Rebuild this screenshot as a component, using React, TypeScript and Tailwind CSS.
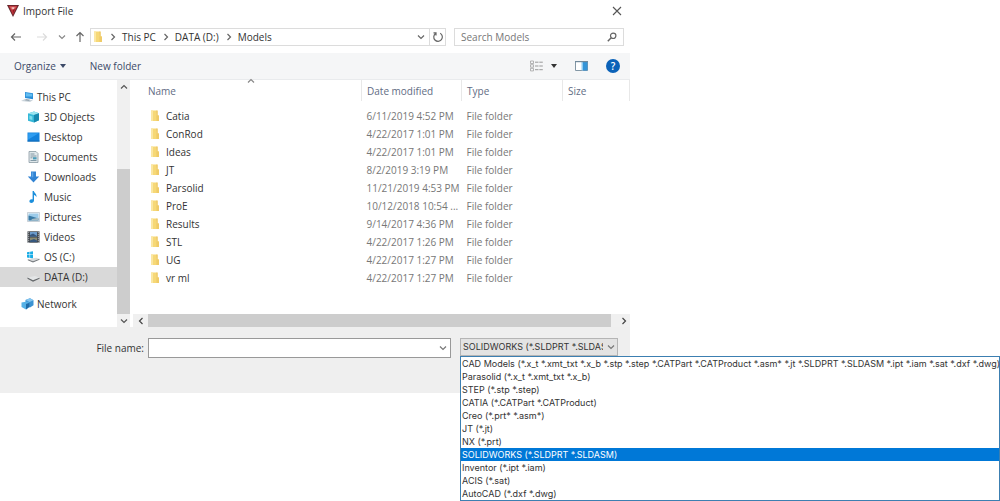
import React, { useState } from "react";

type IconProps = {
  className?: string;
};

type Place = {
  title: string;
  icon: React.FC<IconProps>;
};

type Folder = {
  name: string;
  modified: string;
};

const folders: Array<Folder> = [
  { name: "Catia", modified: "6/11/2019 4:52 PM" },
  { name: "ConRod", modified: "4/22/2017 1:01 PM" },
  { name: "Ideas", modified: "4/22/2017 1:01 PM" },
  { name: "JT", modified: "8/2/2019 3:19 PM" },
  { name: "Parsolid", modified: "11/21/2019 4:53 PM" },
  { name: "ProE", modified: "10/12/2018 10:54 ..." },
  { name: "Results", modified: "9/14/2017 4:36 PM" },
  { name: "STL", modified: "4/22/2017 1:26 PM" },
  { name: "UG", modified: "4/22/2017 1:27 PM" },
  { name: "vr ml", modified: "4/22/2017 1:27 PM" },
];

const fileTypes = [
  "CAD Models (*.x_t *.xmt_txt *.x_b *.stp *.step *.CATPart *.CATProduct *.asm* *.jt *.SLDPRT *.SLDASM *.ipt *.iam *.sat *.dxf *.dwg)",
  "Parasolid (*.x_t *.xmt_txt *.x_b)",
  "STEP (*.stp *.step)",
  "CATIA (*.CATPart *.CATProduct)",
  "Creo (*.prt* *.asm*)",
  "JT (*.jt)",
  "NX (*.prt)",
  "SOLIDWORKS (*.SLDPRT *.SLDASM)",
  "Inventor (*.ipt *.iam)",
  "ACIS (*.sat)",
  "AutoCAD (*.dxf *.dwg)",
];

function AppLogo() {
  return (
    <svg viewBox="0 0 12 12" className="h-3 w-3">
      <path d="M0 0h12L6 12z" fill="#5b2328" />
      <path d="M1.4 .8h9.2L6 10.200z" fill="#b8323a" />
      <path d="M3 1.800h6L7.500 4.600h-3z" fill="#e0706f" />
      <path d="M4.800 2.400h2.600L6 4.400z" fill="#fbe3e0" />
      <path d="M6 5l2-1.400L6 8.400z" fill="#8d1c25" />
    </svg>
  );
}

function Chevron({ className }: IconProps) {
  return (
    <svg viewBox="0 0 8 8" className={className} fill="none" stroke="currentColor">
      <path d="M1 2.500L4 5.500L7 2.500" strokeWidth="1.200" />
    </svg>
  );
}

function Arrow({ className }: IconProps) {
  return (
    <svg viewBox="0 0 12 12" className={className} fill="none" stroke="currentColor">
      <path d="M11 6H1.500M5 2.500L1.500 6L5 9.500" strokeWidth="1.200" />
    </svg>
  );
}

function FolderIcon({ className }: IconProps) {
  return (
    <svg viewBox="0 0 10 12" className={className}>
      <path d="M1 .500h5.500v5H9V11H1z" fill="#f6d877" />
      <path d="M6 .500h1.800v5H9V11H6.500z" fill="#efcb68" />
      <path d="M1 .500h2V11H1z" fill="#fbe7a3" />
    </svg>
  );
}

function PcIcon({ className }: IconProps) {
  return (
    <svg viewBox="0 0 13 12" className={className}>
      <path d="M4 1l8 1.200v6L4 7z" fill="#2b8fd9" />
      <path d="M4.800 2l6.400 1v2.400L4.800 5.500z" fill="#63bdf0" />
      <path d="M0 10l4-2 8 1.200-3 1.800z" fill="#c9d3da" />
      <path d="M5 8.200l4 .6-1 .9-4-.5z" fill="#8697a3" />
    </svg>
  );
}

function CubeIcon({ className }: IconProps) {
  return (
    <svg viewBox="0 0 13 12" className={className}>
      <path d="M1 2.400L7 .600l5 1.600v7L7 11.600 1 9.800z" fill="#35b8d8" />
      <path d="M1 2.400L7 .600l5 1.600-5 1.900z" fill="#9ce5f0" />
      <path d="M7 4.100l5-1.900v7L7 11.600z" fill="#1688ae" />
      <path d="M2.400 4.600l3 .9v3.600l-3-.9z" fill="#7edcec" />
    </svg>
  );
}

function DesktopIcon({ className }: IconProps) {
  return (
    <svg viewBox="0 0 13 12" className={className}>
      <path d="M.5 1.500h12v9H.5z" fill="#1382dc" />
      <path d="M1.200 2.200h10.600L1.200 8.600z" fill="#2e9df1" />
      <path d="M.5 9.600h12v.9H.5z" fill="#0f63ab" />
    </svg>
  );
}

function DocumentIcon({ className }: IconProps) {
  return (
    <svg viewBox="0 0 13 12" className={className}>
      <path d="M2 .500h7l2 2v9H2z" fill="#dfe7ea" stroke="#8a9ba3" strokeWidth=".8" />
      <path d="M3.500 3h4M3.500 5h6M3.500 9.500h6" stroke="#6a8796" strokeWidth=".8" />
      <path d="M6 6.200h3.600v2.200H6z" fill="#4c9dba" />
      <path d="M3.500 6.800h2" stroke="#6a8796" strokeWidth=".8" />
    </svg>
  );
}

function DownloadIcon({ className }: IconProps) {
  return (
    <svg viewBox="0 0 13 12" className={className}>
      <path d="M4 .500h5v5h3.200L6.500 11.500.8 5.500H4z" fill="#3183d3" />
      <path d="M4.700 1.200h1.600v5H2.600L4.700 6z" fill="#5ca5e6" />
    </svg>
  );
}

function MusicIcon({ className }: IconProps) {
  return (
    <svg viewBox="0 0 13 12" className={className}>
      <path
        d="M5.600 0h1.300c.2 2 3.200 2.800 2.500 6.200-.4-1.400-1.300-2-2.400-2.300v5.500c0 1.600-1.300 2.500-2.600 2.500S2.400 11.200 2.400 10.200c0-1.300 1.500-2.200 3.200-1.800z"
        fill="#1b8fdc"
      />
    </svg>
  );
}

function PictureIcon({ className }: IconProps) {
  return (
    <svg viewBox="0 0 13 12" className={className}>
      <path d="M.5 1.500h12v9H.5z" fill="#f1f5f8" stroke="#b3bfc8" strokeWidth=".7" />
      <path d="M1.500 2.500h10v7h-10z" fill="#9ccbe9" />
      <path d="M1.500 4.500l3.500 1 6.500 2v2h-10z" fill="#397aa5" />
      <path d="M5 8l6.500-1.200v2.700H4z" fill="#a3bbc6" />
    </svg>
  );
}

function VideoIcon({ className }: IconProps) {
  return (
    <svg viewBox="0 0 13 12" className={className}>
      <path d="M.5.300h12v11.400H.5z" fill="#3d4248" />
      <path d="M3 1h7v4.500H3z" fill="#6b9bcb" />
      <path d="M3 6.500h7V11H3z" fill="#8a8a70" />
      <path d="M3 4l3-1.500L10 5v.5H3zM3 9.500L7 8l3 1.500V11H3z" fill="#36577e" />
      <path d="M1.700.800v11M11.300.800v11" stroke="#c6cbd0" strokeDasharray="1 1" />
    </svg>
  );
}

function WindowsDriveIcon({ className }: IconProps) {
  return (
    <svg viewBox="0 0 13 12" className={className}>
      <path
        d="M0 1.200L2.600.800v2.800H0zM3.100.700L6 .300v3.300H3.100zM0 4.100h2.600v2.800L0 6.500zM3.100 4.100H6v3.300l-2.900-.4z"
        fill="#18ace6"
      />
      <path d="M.8 8.200L9 6.700l3.500 1L6 10.200z" fill="#d7dadc" />
      <path d="M.8 8.200L6 10.200l6.500-2.500v1.100L6 11.500.8 9.200z" fill="#74797d" />
    </svg>
  );
}

function DriveIcon({ className }: IconProps) {
  return (
    <svg viewBox="0 0 13 12" className={className}>
      <path d="M.5 6.500L8 5l4.500 1.700L6 9.300z" fill="#e4e6e7" />
      <path d="M.5 6.500L6 9.300l6.500-2.600v1.100L6 10.800.5 7.800z" fill="#64686b" />
    </svg>
  );
}

function NetworkIcon({ className }: IconProps) {
  return (
    <svg viewBox="0 0 13 12" className={className}>
      <path d="M4.500 2L9 .300l3.500 2v5L9 9.500 4.500 8z" fill="#3b93d3" />
      <path d="M4.500 2L9 .300l3.500 2L8.500 4z" fill="#86c6ef" />
      <path d="M.5 4.500L6 3.500l2.500 1.300v4L5 11.500.5 9z" fill="#55b1e6" />
      <path d="M5 6l3.500-1.200v4L5 11.500z" fill="#1f6ba8" />
    </svg>
  );
}

const places: Array<Place> = [
  { title: "3D Objects", icon: CubeIcon },
  { title: "Desktop", icon: DesktopIcon },
  { title: "Documents", icon: DocumentIcon },
  { title: "Downloads", icon: DownloadIcon },
  { title: "Music", icon: MusicIcon },
  { title: "Pictures", icon: PictureIcon },
  { title: "Videos", icon: VideoIcon },
  { title: "OS (C:)", icon: WindowsDriveIcon },
  { title: "DATA (D:)", icon: DriveIcon },
];

function TitleBar() {
  return (
    <header className="flex h-[22px] items-center pr-2 pl-[7px]">
      <AppLogo />
      <h1 className="ml-1">Import File</h1>
      <button aria-label="Close" className="ml-auto text-[#555]">
        <svg viewBox="0 0 10 10" className="h-[10px] w-[10px]" stroke="currentColor">
          <path d="M1 1L9 9M9 1L1 9" strokeWidth="1.100" />
        </svg>
      </button>
    </header>
  );
}

function AddressBar() {
  const crumbs = ["This PC", "DATA (D:)", "Models"];

  return (
    <div className="mt-[6px] flex h-[18px] items-center pr-[6px] pl-[10px]">
      <button aria-label="Back" className="text-[#666]">
        <Arrow className="h-3 w-3" />
      </button>
      <button aria-label="Forward" className="ml-[14px] text-[#dcdcdc]">
        <Arrow className="h-3 w-3 rotate-180" />
      </button>
      <button aria-label="Recent locations" className="ml-[10px] text-[#888]">
        <Chevron className="h-2 w-2" />
      </button>
      <button aria-label="Up" className="ml-2 text-[#666]">
        <Arrow className="h-3 w-3 rotate-90" />
      </button>

      <nav className="ml-1 flex h-full flex-1 items-center border border-[#dcdcdc] pl-[2px]">
        <FolderIcon className="h-3 w-[10px]" />
        {crumbs.map((crumb, index) => {
          return (
            <React.Fragment key={`crumb-${index}`}>
              <Chevron className="ml-[6px] h-2 w-2 -rotate-90 text-[#666]" />
              <button className="ml-[5px] whitespace-nowrap">{crumb}</button>
            </React.Fragment>
          );
        })}
        <button aria-label="Previous locations" className="ml-auto px-1 text-[#666]">
          <Chevron className="h-2 w-2" />
        </button>
        <button
          aria-label="Refresh"
          className="flex h-full w-4 items-center justify-center border-l border-[#dcdcdc] text-[#666]"
        >
          <svg viewBox="0 0 12 12" className="h-3 w-3" fill="none" stroke="currentColor">
            <path d="M8.200 2.300A4.300 4.300 0 1 1 3.600 2.500M1.500 1.900H4V4.600" strokeWidth="1.200" />
          </svg>
        </button>
      </nav>

      <div className="ml-2 flex h-full w-[170px] items-center border border-[#dcdcdc] px-[6px]">
        <input
          type="text"
          aria-label="Search Models"
          placeholder="Search Models"
          className="min-w-0 flex-1 outline-none placeholder:text-[#777]"
        />
        <svg viewBox="0 0 10 10" className="h-[10px] w-[10px] text-[#666]" fill="none" stroke="currentColor">
          <circle cx="6.200" cy="3.800" r="2.700" strokeWidth="1.200" />
          <path d="M4.200 5.800L.8 9.200" strokeWidth="1.500" />
        </svg>
      </div>
    </div>
  );
}

function Toolbar() {
  return (
    <div className="mt-[7px] flex h-[27px] items-center border-b border-[#e9ebed] bg-[#f5f6f7] pr-[10px] pl-[14px] text-[#3c4a68]">
      <button className="flex items-center">
        Organize
        <svg viewBox="0 0 6 4" className="ml-1 h-1 w-[6px]" fill="currentColor">
          <path d="M0 0h6L3 4z" />
        </svg>
      </button>
      <button className="ml-6">New folder</button>

      <button aria-label="Change your view" className="ml-auto flex items-center">
        <svg viewBox="0 0 13 12" className="h-3 w-[13px]" fill="none">
          <path d="M.5 1h3v2.500h-3zM.5 4.700h3v2.500h-3zM.5 8.400h3v2.500h-3z" stroke="#a2a2a2" strokeWidth=".8" />
          <path d="M5 2.200h8M5 6h8M5 9.700h8" stroke="#999" strokeDasharray="3.500 .8" />
        </svg>
        <svg viewBox="0 0 6 4" className="ml-2 h-1 w-[6px]" fill="#333">
          <path d="M0 0h6L3 4z" />
        </svg>
      </button>
      <button aria-label="Preview pane" className="ml-[18px]">
        <svg viewBox="0 0 13 10" className="h-[10px] w-[13px]">
          <path d="M.5.500h12v9H.5z" fill="#fff" stroke="#8397a5" />
          <path d="M6.500 1h2v8.500h-2z" fill="#8ecbf0" />
          <path d="M8 1h4.500v8.500H8z" fill="#3495d8" />
          <path d="M0 0h13v1.200H0z" fill="#71899b" />
        </svg>
      </button>
      <button
        aria-label="Help"
        className="ml-[18px] flex h-[14px] w-[14px] items-center justify-center rounded-full bg-[#0b62b8] leading-none font-semibold text-white"
      >
        ?
      </button>
    </div>
  );
}

function Sidebar() {
  const rowClass = "flex h-5 items-center gap-1 pl-[27px] whitespace-nowrap";
  const activeClass = "flex h-5 items-center gap-1 bg-[#d9d9d9] pl-[27px] whitespace-nowrap";

  return (
    <aside className="flex w-[130px] shrink-0">
      <nav className="min-w-0 flex-1 pt-[7px] pb-[13px]">
        <a href="#this-pc" className="flex h-5 items-center gap-[3px] pl-[21px]">
          <PcIcon className="h-3 w-[13px]" />
          This PC
        </a>
        {places.map((place, index) => {
          const Icon = place.icon;
          return (
            <a
              href={`#place-${index}`}
              key={`place-${index}`}
              className={place.title === "DATA (D:)" ? activeClass : rowClass}
            >
              <Icon className="h-3 w-[13px]" />
              {place.title}
            </a>
          );
        })}
        <a href="#network" className="mt-[7px] flex h-5 items-center gap-[3px] pl-[21px]">
          <NetworkIcon className="h-3 w-[13px]" />
          Network
        </a>
      </nav>

      <div className="flex w-[13px] flex-col bg-[#f0f0f0] text-[#555]">
        <button aria-label="Scroll up" className="flex h-[13px] items-center justify-center">
          <Chevron className="h-2 w-2 rotate-180" />
        </button>
        <div className="mt-auto h-[145px] bg-[#cdcdcd]" />
        <button aria-label="Scroll down" className="flex h-[13px] items-center justify-center">
          <Chevron className="h-2 w-2" />
        </button>
      </div>
    </aside>
  );
}

function FileList() {
  return (
    <main className="ml-[3px] flex min-w-0 flex-1 flex-col">
      <table className="w-full table-fixed text-left text-[#777]">
        <colgroup>
          <col />
          <col className="w-[100px]" />
          <col className="w-[101px]" />
          <col className="w-[67px]" />
        </colgroup>
        <thead className="text-[#5f6c84]">
          <tr className="h-[21px]">
            <th className="relative p-0 pl-[15px] font-normal">
              Name
              <Chevron className="absolute -top-[3px] left-1/2 h-2 w-2 rotate-180 text-[#888]" />
            </th>
            <th className="border-l border-[#e8e8e8] p-0 pl-[5px] font-normal">Date modified</th>
            <th className="border-l border-[#e8e8e8] p-0 pl-[5px] font-normal">Type</th>
            <th className="border-x border-[#e8e8e8] p-0 pl-[5px] font-normal">Size</th>
          </tr>
        </thead>
        <tbody>
          <tr className="h-[6px]" />
          {folders.map((folder) => {
            return (
              <tr key={folder.name} className="h-[18px]">
                <td className="p-0 pl-[17px] text-[#333]">
                  <span className="flex items-center gap-[6px]">
                    <FolderIcon className="h-3 w-[10px]" />
                    {folder.name}
                  </span>
                </td>
                <td className="p-0 pl-[5px] whitespace-nowrap">{folder.modified}</td>
                <td className="p-0 pl-[5px]">File folder</td>
                <td className="p-0" />
              </tr>
            );
          })}
        </tbody>
      </table>

      <div className="mt-auto flex h-[13px] bg-[#f0f0f0] text-[#444]">
        <button aria-label="Scroll left" className="flex w-[15px] items-center justify-center">
          <Chevron className="h-2 w-2 rotate-90" />
        </button>
        <div className="flex-1 bg-[#cdcdcd]" />
        <button aria-label="Scroll right" className="ml-[6px] flex w-[13px] items-center justify-center">
          <Chevron className="h-2 w-2 -rotate-90" />
        </button>
      </div>
    </main>
  );
}

function FileNameRow() {
  const [selected, setSelected] = useState(fileTypes[7]);

  return (
    <footer className="flex items-start bg-[#efefef] pt-[11px] pr-3 pb-[35px]">
      <label htmlFor="file-name" className="w-[144px] text-right leading-5">
        File name:
      </label>
      <div className="ml-1 flex h-5 flex-1 items-center border border-[#999] bg-white">
        <input id="file-name" type="text" className="min-w-0 flex-1 px-1 outline-none" />
        <button aria-label="Recent file names" className="px-[3px] text-[#777]">
          <Chevron className="h-2 w-2" />
        </button>
      </div>

      <div className="relative ml-[9px] w-[158px] font-['Inter','Open_Sans',sans-serif] text-[9px]">
        <select
          aria-label="File type"
          value={selected}
          onChange={(event) => setSelected(event.target.value)}
          className="block h-[18px] w-full appearance-none border border-[#b5b5b5] bg-[#e3e3e3] pr-[14px] pl-[2px] outline-none"
        >
          {fileTypes.map((item) => {
            return <option key={item}>{item}</option>;
          })}
        </select>
        <Chevron className="pointer-events-none absolute top-[5px] right-[3px] h-2 w-2 text-[#777]" />

        <ul
          role="listbox"
          aria-label="File types"
          className="absolute top-full left-0 w-[540px] border border-[#3c7fb1] bg-white"
        >
          {fileTypes.map((item) => {
            return (
              <li
                key={item}
                role="option"
                aria-selected={item === selected}
                onClick={() => setSelected(item)}
                className={
                  item === selected
                    ? "bg-[#0078d7] pl-px leading-[13px] whitespace-nowrap text-white"
                    : "pl-px leading-[13px] whitespace-nowrap"
                }
              >
                {item}
              </li>
            );
          })}
        </ul>
      </div>
    </footer>
  );
}

function App() {
  return (
    <div className="min-h-screen overflow-hidden bg-white font-['Open_Sans','Noto_Sans',sans-serif] text-[10px] leading-4 text-[#333]">
      <section aria-label="Import File" className="w-[63%]">
        <TitleBar />
        <AddressBar />
        <Toolbar />
        <div className="flex">
          <Sidebar />
          <FileList />
        </div>
        <FileNameRow />
      </section>
    </div>
  );
}

export default App;
